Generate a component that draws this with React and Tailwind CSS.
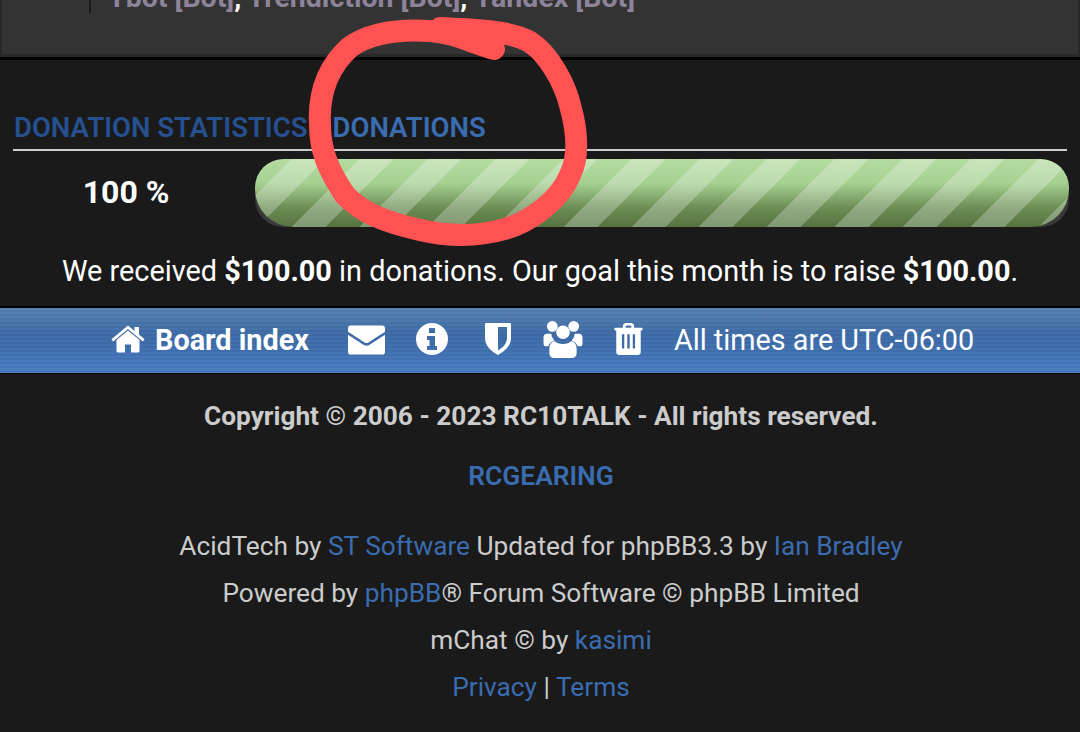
const Sep = () => <span className="text-white">, </span>;

function HomeIcon() {
    return (
        <svg viewBox="0 0 34 28" className="w-[34px] h-[28px]" fill="white">
            <path d="M17 5.500 5.500 15v11a1.400 1.400 0 0 0 1.400 1.400H14v-8h6v8h7.100a1.400 1.400 0 0 0 1.400-1.400V15z" />
            <path d="M17 0.500 0.400 14.300l1.700 2.100L17 4l14.900 12.400 1.700-2.100L28 9.600V2h-4.500v3.900z" />
        </svg>
    );
}

function MailIcon() {
    return (
        <svg viewBox="0 0 38 30" className="w-[37px] h-[30px]" fill="white">
            <path d="M3 0h32a3 3 0 0 1 3 3v3.500L21 17.500a4 4 0 0 1-4 0L0 6.500V3a3 3 0 0 1 3-3z" />
            <path d="M0 9.500 15.800 20a6 6 0 0 0 6.400 0L38 9.500V27a3 3 0 0 1-3 3H3a3 3 0 0 1-3-3z" />
        </svg>
    );
}

function InfoIcon() {
    return (
        <svg viewBox="0 0 32 32" className="w-[32px] h-[32px]" fill="white" fillRule="evenodd">
            <path d="M16 0a16 16 0 1 1 0 32a16 16 0 0 1 0-32zM13 5v5h6V5zM11 13v4h2.500v6H11v4h10v-4h-2V13z" />
        </svg>
    );
}

function ShieldIcon() {
    return (
        <svg viewBox="0 0 26 32" className="w-[26px] h-[32px]" fill="white" fillRule="evenodd">
            <path d="M1 0h24a1 1 0 0 1 1 1v14c0 8-6 13-13 17C6 28 0 23 0 15V1a1 1 0 0 1 1-1zM13 4v23.500c5-3 9-7 9-12.500V4z" />
        </svg>
    );
}

function UsersIcon() {
    return (
        <svg viewBox="0 0 40 38" className="w-[40px] h-[37px]" fill="white">
            <circle cx="9" cy="5.500" r="5.500" />
            <circle cx="31" cy="5.500" r="5.500" />
            <circle cx="20" cy="11.500" r="7" />
            <path d="M3 13h5a10 10 0 0 0 3 7c-3 1-5 3-6 6H3a3 3 0 0 1-3-3v-6a4 4 0 0 1 3-4z" />
            <path d="M37 13h-5a10 10 0 0 1-3 7c3 1 5 3 6 6h2a3 3 0 0 0 3-3v-6a4 4 0 0 0-3-4z" />
            <path d="M11 20.500c2.500 2 5.500 3 9 3s6.500-1 9-3c3 1 5 4 5 8V33c0 3-2 5-5 5H11c-3 0-5-2-5-5v-4.500c0-4 2-7 5-8z" />
        </svg>
    );
}

function TrashIcon() {
    return (
        <svg viewBox="0 0 30 34" className="w-[29px] h-[32px]" fill="white" fillRule="evenodd">
            <path d="M9 5V3.500C9 1.500 10.500 0 12.500 0h5C19.500 0 21 1.500 21 3.500V5h8a1 1 0 0 1 1 1v1a1 1 0 0 1-1 1h-1v23c0 1.700-1.300 3-3 3H5c-1.700 0-3-1.300-3-3V8H1a1 1 0 0 1-1-1V6a1 1 0 0 1 1-1zm3 0h6V3.500a.8.8 0 0 0-.8-.8h-4.400a.8.8 0 0 0-.8.8zM8 12v15h2.500V12zm5.700 0v15h2.600V12zm5.800 0v15H22V12z" />
        </svg>
    );
}

export default function App() {
    return (
        <div className="relative w-[1080px] h-[732px] overflow-hidden bg-[#1a1a1a] font-['Roboto',sans-serif] text-[26.250px] text-[#cccccc]">
            {/* clipped panel from above */}
            <div className="h-[60px] overflow-hidden bg-[#000] pb-[3px]">
                <div className="h-[57px] border-l-[2px] border-b-[3px] border-r-[2px] border-[#282828] bg-[#333333] overflow-hidden">
                    <div className="ml-[87px] h-[29px] border-l-[2px] border-[#1a1a1a] pl-[17px]">
                        <div className="-mt-[16px] text-[28.500px] leading-[28px] font-bold text-[#8d8499] whitespace-nowrap">
                            Ybot [Bot]<Sep />Trendiction [Bot]<Sep />Yandex [Bot]
                        </div>
                    </div>
                </div>
            </div>

            {/* donations */}
            <div className="mt-[52px] mx-[13px] border-b-[2px] border-[#cccccc] h-[39px] flex items-start">
                <h3 className="ml-[1px] text-[27.500px] leading-[32px] font-semibold whitespace-nowrap text-[#26508f]">
                    DONATION STATISTICS
                </h3>
                <h3 className="ml-[25px] text-[27.500px] leading-[32px] font-semibold whitespace-nowrap text-[#3a6cb0]">
                    DONATIONS
                </h3>
            </div>

            <div className="flex items-center mt-[8px] ml-[13px] mr-[11px]">
                <div className="w-[226px] -mt-[2px] text-center text-[32px] leading-[36px] font-bold text-white">100 %</div>
                <div className="ml-[16px] flex-1 h-[68px] rounded-[28px] bg-[#3a3a3a] overflow-hidden">
                    <div className="h-[68px] rounded-t-[28px] rounded-b-[38px] overflow-hidden bg-[linear-gradient(to_bottom,#b5dca3_0%,#a6d192_35%,#6c8d55_72%,#55733f_100%)]">
                        <div className="h-full bg-[repeating-linear-gradient(135deg,rgba(255,255,255,0.26)_0px,rgba(255,255,255,0.26)_2px,rgba(255,255,255,0)_2px,rgba(255,255,255,0)_26px,rgba(255,255,255,0.26)_26px,rgba(255,255,255,0.26)_48px)]" />
                    </div>
                </div>
            </div>

            <p className="mt-[26px] text-center text-[28.850px] leading-[36px] text-white whitespace-nowrap">
                We received <b>$100.00</b> in donations. Our goal this month is to raise <b>$100.00</b>.
            </p>

            {/* nav bar */}
            <div className="mt-[17px] h-[68px] border-t-[2px] border-b-[1px] border-black bg-[repeating-linear-gradient(to_bottom,rgba(255,255,255,0.025)_0px,rgba(255,255,255,0.025)_2px,rgba(0,0,0,0.025)_2px,rgba(0,0,0,0.025)_4px),linear-gradient(to_bottom,#5580ae_0%,#3d6ba6_40%,#3e6ead_60%,#4a7dc2_100%)] flex items-center pl-[111px] text-white">
                <span className="-mt-[4px]"><HomeIcon /></span>
                <span className="ml-[10px] -mt-[2px] text-[28.800px] leading-[36px] font-bold whitespace-nowrap">Board index</span>
                <span className="ml-[39px] -mt-[2px]"><MailIcon /></span>
                <span className="ml-[31px] -mt-[3px]"><InfoIcon /></span>
                <span className="ml-[37px] -mt-[3px]"><ShieldIcon /></span>
                <span className="ml-[32px] -mt-[3px]"><UsersIcon /></span>
                <span className="ml-[31px] -mt-[3px]"><TrashIcon /></span>
                <span className="ml-[31px] -mt-[2px] text-[28.800px] leading-[36px] whitespace-nowrap">All times are UTC-06:00</span>
            </div>

            {/* footer */}
            <div className="flex flex-col items-center pl-[2px]">
                <p className="mt-[26px] leading-[32px] font-bold">Copyright © 2006 - 2023 RC10TALK - All rights reserved.</p>
                <p className="mt-[28px] text-[26.400px] leading-[32px] font-semibold text-[#3a6cb0]">RCGEARING</p>
                <p className="mt-[38px] leading-[32px]">
                    AcidTech by <span className="text-[#3a6cb0]">ST Software</span> Updated for phpBB3.3 by <span className="text-[#3a6cb0]">Ian Bradley</span>
                </p>
                <p className="mt-[15px] leading-[32px]">
                    Powered by <span className="text-[#3a6cb0]">phpBB</span>® Forum Software © phpBB Limited
                </p>
                <p className="mt-[15px] leading-[32px]">
                    mChat © by <span className="text-[#3a6cb0]">kasimi</span>
                </p>
                <p className="mt-[15px] leading-[32px]">
                    <span className="text-[#3a6cb0]">Privacy</span> | <span className="text-[#3a6cb0]">Terms</span>
                </p>
            </div>

            {/* hand drawn annotation over the page */}
            <svg className="absolute left-0 top-0 pointer-events-none" width="1080" height="732" fill="none">
                <path
                    d="M494 49C470 42 455 33 430 31C400 29 370 33 350 47C330 65 318 90 320 125C320 150 328 170 345 195C362 213 385 222 420 230C450 237 480 236 505 229C530 222 560 200 570 175C580 155 577 130 570 105C565 85 550 55 530 42C515 33 490 30 440 28"
                    stroke="#ff5252"
                    strokeWidth="22"
                    strokeLinecap="round"
                    strokeLinejoin="round"
                />
            </svg>
        </div>
    );
}
